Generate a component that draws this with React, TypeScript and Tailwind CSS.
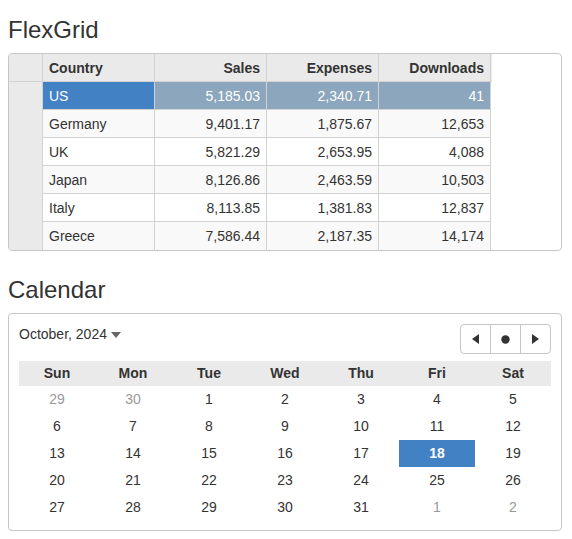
import React from "react";

const rows = [
  { country: "US", sales: "5,185.03", expenses: "2,340.71", downloads: "41" },
  { country: "Germany", sales: "9,401.17", expenses: "1,875.67", downloads: "12,653" },
  { country: "UK", sales: "5,821.29", expenses: "2,653.95", downloads: "4,088" },
  { country: "Japan", sales: "8,126.86", expenses: "2,463.59", downloads: "10,503" },
  { country: "Italy", sales: "8,113.85", expenses: "1,381.83", downloads: "12,837" },
  { country: "Greece", sales: "7,586.44", expenses: "2,187.35", downloads: "14,174" },
];

const weeks = [
  [29, 30, 1, 2, 3, 4, 5],
  [6, 7, 8, 9, 10, 11, 12],
  [13, 14, 15, 16, 17, 18, 19],
  [20, 21, 22, 23, 24, 25, 26],
  [27, 28, 29, 30, 31, 1, 2],
];

const days = ["Sun", "Mon", "Tue", "Wed", "Thu", "Fri", "Sat"];

function FlexGrid() {
  return (
    <div className="w-[554px] h-[198px] border border-[#c6c6c6] rounded-[4px] overflow-hidden bg-white">
      <div className="w-[483px] border-b-2 border-[#c8c8c8]">
        {/* Header */}
        <div className="flex h-[28px] bg-[#eaeaea] border-b border-[#d2d2d2] font-bold">
          <div className="w-[34px] border-r border-[#d2d2d2]" />
          <div className="w-[112px] px-[6px] border-r border-[#d2d2d2] leading-[28px]">Country</div>
          <div className="w-[112px] px-[6px] border-r border-[#d2d2d2] leading-[28px] text-right">Sales</div>
          <div className="w-[112px] px-[6px] border-r border-[#d2d2d2] leading-[28px] text-right">Expenses</div>
          <div className="w-[112px] px-[6px] border-r border-[#d2d2d2] leading-[28px] text-right">Downloads</div>
        </div>
        {rows.map((r, i) => {
          const selected = i === 0;
          const alt = i % 2 === 1;
          const cellBg = selected ? "bg-[#8ca6bd] text-white" : alt ? "bg-[#f9f9f9]" : "bg-white";
          const last = i === rows.length - 1;
          return (
            <div key={r.country} className="flex h-[28px]">
              <div className="w-[34px] bg-[#eaeaea] border-r border-[#d2d2d2]" />
              <div
                className={`w-[112px] px-[6px] border-r leading-[28px] ${
                  last ? "" : "border-b"
                } border-[#d2d2d2] ${selected ? "bg-[#4281c4] text-white" : cellBg}`}
              >
                {r.country}
              </div>
              <div className={`w-[112px] px-[6px] border-r ${last ? "" : "border-b"} border-[#d2d2d2] leading-[28px] text-right ${cellBg}`}>
                {r.sales}
              </div>
              <div className={`w-[112px] px-[6px] border-r ${last ? "" : "border-b"} border-[#d2d2d2] leading-[28px] text-right ${cellBg}`}>
                {r.expenses}
              </div>
              <div className={`w-[112px] px-[6px] border-r ${last ? "" : "border-b"} border-[#d2d2d2] leading-[28px] text-right ${cellBg}`}>
                {r.downloads}
              </div>
            </div>
          );
        })}
      </div>
    </div>
  );
}

function Calendar() {
  return (
    <div className="w-[554px] border border-[#c6c6c6] rounded-[4px] bg-white px-[10px] pt-[10px] pb-[9px]">
      <div className="flex items-start justify-between h-[30px]">
        <div className="flex items-center gap-[4px] mt-[1px] h-[18px]">
          <span>October, 2024</span>
          <svg width="10" height="6" viewBox="0 0 10 6" className="mt-[1px]">
            <path d="M0 0 L10 0 L5 6 Z" fill="#666" />
          </svg>
        </div>
        <div className="flex h-[30px] border border-[#c6c6c6] rounded-[4px] overflow-hidden">
          <button className="w-[30px] flex items-center justify-center border-r border-[#c6c6c6]">
            <svg width="7" height="10" viewBox="0 0 7 10">
              <path d="M7 0 L7 10 L0 5 Z" fill="#333" />
            </svg>
          </button>
          <button className="w-[30px] flex items-center justify-center border-r border-[#c6c6c6]">
            <svg width="9" height="9" viewBox="0 0 9 9">
              <circle cx="4.5" cy="4.5" r="4.2" fill="#333" />
            </svg>
          </button>
          <button className="w-[29px] flex items-center justify-center">
            <svg width="7" height="10" viewBox="0 0 7 10">
              <path d="M0 0 L0 10 L7 5 Z" fill="#333" />
            </svg>
          </button>
        </div>
      </div>
      <div className="mt-[7px] grid grid-cols-7 h-[25px] bg-[#eaeaea] font-bold leading-[24px] text-center">
        {days.map((d) => (
          <div key={d}>{d}</div>
        ))}
      </div>
      {weeks.map((w, wi) => (
        <div key={wi} className="grid grid-cols-7 h-[27px] text-center">
          {w.map((d, di) => {
            const other = (wi === 0 && d > 20) || (wi === 4 && d < 10);
            const today = wi === 2 && di === 5;
            return (
              <div
                key={di}
                className={`leading-[27px] ${
                  today ? "bg-[#4281c4] text-white font-bold" : other ? "text-[#999]" : ""
                }`}
              >
                {d}
              </div>
            );
          })}
        </div>
      ))}
    </div>
  );
}

export default function App() {
  return (
    <div className="bg-white text-[#333] text-[14px] px-2 pt-[16px] pb-4 [font-family:'Liberation_Sans',Arial,sans-serif]">
      <h3 className="text-[24px] leading-[27px] h-[26px]">FlexGrid</h3>
      <div className="mt-[11px]">
        <FlexGrid />
      </div>
      <h3 className="text-[24px] leading-[27px] h-[26px] mt-[25px]">Calendar</h3>
      <div className="mt-[11px]">
        <Calendar />
      </div>
    </div>
  );
}
